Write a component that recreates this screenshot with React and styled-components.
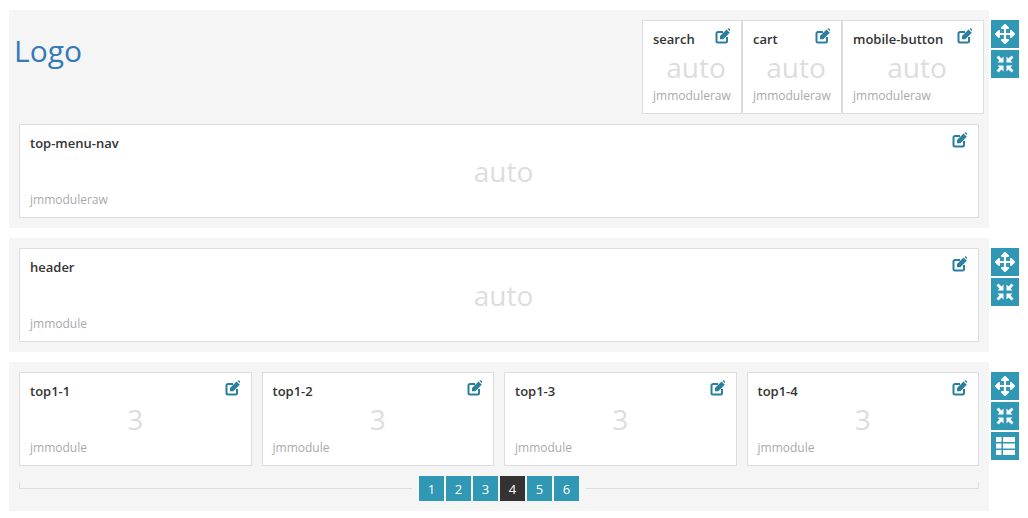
import styled, { createGlobalStyle } from "styled-components";
import { FaArrowsAlt } from "react-icons/fa";

const GlobalStyle = createGlobalStyle`
  body {
    margin: 0;
    background: #fff;
    font-family: "Open Sans", sans-serif;
    overflow: hidden;
  }
`;

const Page = styled.div`
  display: flex;
  flex-direction: column;
  gap: 10px;
  padding: 10px 9px 0;
`;

const Row = styled.div`
  display: flex;
  gap: 2px;
`;

const Section = styled.div`
  flex: 1;
  min-width: 0;
  display: flex;
  flex-direction: column;
  gap: 10px;
  padding: 10px;
  background: #f5f5f5;
`;

const Side = styled.div`
  width: 28px;
  padding-top: 10px;
  display: flex;
  flex-direction: column;
  gap: 2px;
`;

const SideButton = styled.div`
  width: 28px;
  height: 28px;
  display: flex;
  justify-content: center;
  align-items: center;
  background: #3097b5;
  color: #fff;
  font-size: 20px;
`;

const HeaderRow = styled.div`
  display: flex;
  justify-content: space-between;
  margin: 0 -5px;
`;

const Logo = styled.div`
  padding-top: 10px;
  font-size: 30px;
  line-height: 42px;
  color: #337ab7;
`;

const Modules = styled.div`
  display: flex;
`;

const Card = styled.div`
  box-sizing: border-box;
  width: ${({ $width }) => ($width ? `${$width}px` : "auto")};
  height: 94px;
  padding: 8px 10px 0;
  display: flex;
  flex-direction: column;
  background: #fff;
  border: 1px solid #ddd;
`;

const CardHead = styled.div`
  display: flex;
  justify-content: space-between;
  height: 20px;
`;

const Name = styled.span`
  font-size: 13px;
  line-height: 20px;
  font-weight: 600;
  color: #333;
`;

const EditIcon = styled.svg`
  display: block;
  width: 15px;
  height: 16px;
  margin: -1px 1px 0 0;
  color: #2a7f9e;
`;

const Span = styled.div`
  height: 38px;
  padding-left: ${({ $shift }) => $shift || 0}px;
  text-align: center;
  font-size: 28px;
  font-weight: 400;
  line-height: 36px;
  color: #ddd;
`;

const ModuleType = styled.div`
  font-size: 12px;
  line-height: 18px;
  color: #aaa;
`;

const Grid = styled.div`
  display: grid;
  grid-template-columns: repeat(4, 1fr);
  gap: 10px;
`;

const Pager = styled.div`
  display: flex;
  align-items: center;
  gap: 7px;
  height: 25px;
`;

const Line = styled.div`
  flex: 1;
  height: 6px;
  margin-bottom: 6px;
  border-bottom: 1px solid #ddd;
  border-left: ${({ $end }) => ($end ? "none" : "1px solid #ddd")};
  border-right: ${({ $end }) => ($end ? "1px solid #ddd" : "none")};
`;

const Pages = styled.div`
  display: flex;
  gap: 2px;
`;

const PageButton = styled.div`
  width: 25px;
  height: 25px;
  display: flex;
  justify-content: center;
  align-items: center;
  font-size: 13px;
  color: #fff;
  background: ${({ $active }) => ($active ? "#333" : "#3097b5")};
`;

const Edit = () => (
  <EditIcon viewBox="0 0 15 16">
    <path
      d="M8 4H3a1.5 1.5 0 0 0-1.5 1.5v7.5A1.5 1.5 0 0 0 3 14.500h7.500A1.500 1.500 0 0 0 12 13V9"
      fill="none"
      stroke="currentColor"
      strokeWidth="2"
    />
    <path d="M5 8 11.500 1.500 14.800 4.800 8.300 11.300H5z" fill="currentColor" />
    <path d="M12.400 .8 13 .4a.8.8 0 0 1 1.100 0l.9.9a.8.8 0 0 1 0 1.100l-.4.600z" fill="currentColor" />
  </EditIcon>
);

const Arrow = ({ transform }) => (
  <polygon
    points="7.500,7.500 1.500,7.500 3.500,5.500 0.500,2.500 2.500,0.500 5.500,3.500 7.500,1.500"
    fill="currentColor"
    transform={transform}
  />
);

const Compress = () => (
  <svg width="18" height="18" viewBox="0 0 18 18">
    <Arrow />
    <Arrow transform="translate(18 0) scale(-1 1)" />
    <Arrow transform="translate(0 18) scale(1 -1)" />
    <Arrow transform="translate(18 18) scale(-1 -1)" />
  </svg>
);

const List = () => (
  <svg width="19" height="18" viewBox="0 0 19 18" fill="currentColor">
    {[0, 6.5, 13].map((y) => (
      <g key={y}>
        <rect x="0" y={y} width="5.500" height="5" />
        <rect x="7" y={y} width="12" height="5" />
      </g>
    ))}
  </svg>
);

const Module = ({ name, span, type, width, shift }) => (
  <Card $width={width}>
    <CardHead>
      <Name>{name}</Name>
      <Edit />
    </CardHead>
    <Span $shift={shift}>{span}</Span>
    <ModuleType>{type}</ModuleType>
  </Card>
);

export default function App() {
  return (
    <>
      <GlobalStyle />
      <Page>
        <Row>
          <Section>
            <HeaderRow>
              <Logo>Logo</Logo>
              <Modules>
                <Module name="search" span="auto" type="jmmoduleraw" width={100} shift={8} />
                <Module name="cart" span="auto" type="jmmoduleraw" width={100} shift={8} />
                <Module name="mobile-button" span="auto" type="jmmoduleraw" width={142} shift={8} />
              </Modules>
            </HeaderRow>
            <Module name="top-menu-nav" span="auto" type="jmmoduleraw" shift={9} />
          </Section>
          <Side>
            <SideButton><FaArrowsAlt /></SideButton>
            <SideButton><Compress /></SideButton>
          </Side>
        </Row>
        <Row>
          <Section>
            <Module name="header" span="auto" type="jmmodule" shift={9} />
          </Section>
          <Side>
            <SideButton><FaArrowsAlt /></SideButton>
            <SideButton><Compress /></SideButton>
          </Side>
        </Row>
        <Row>
          <Section>
            <Grid>
              {["top1-1", "top1-2", "top1-3", "top1-4"].map((name) => (
                <Module key={name} name={name} span="3" type="jmmodule" />
              ))}
            </Grid>
            <Pager>
              <Line />
              <Pages>
                {[1, 2, 3, 4, 5, 6].map((n) => (
                  <PageButton key={n} $active={n === 4}>{n}</PageButton>
                ))}
              </Pages>
              <Line $end />
            </Pager>
          </Section>
          <Side>
            <SideButton><FaArrowsAlt /></SideButton>
            <SideButton><Compress /></SideButton>
            <SideButton><List /></SideButton>
          </Side>
        </Row>
      </Page>
    </>
  );
}
